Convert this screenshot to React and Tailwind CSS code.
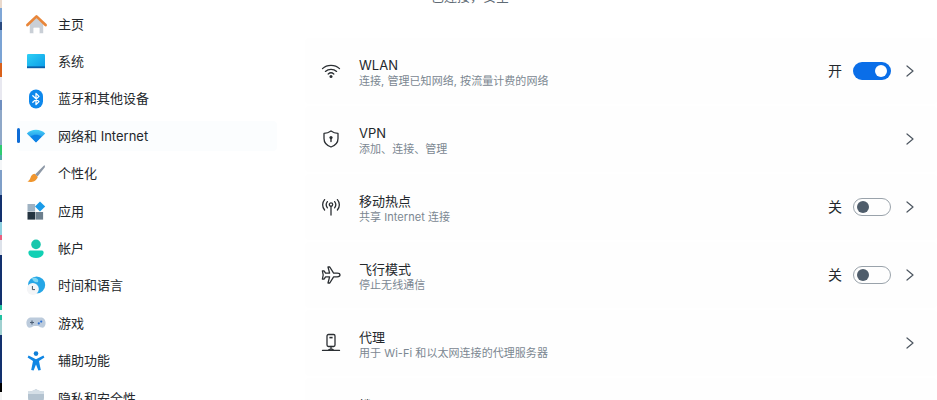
import React from "react";

const Home = () => (
  <svg viewBox="0 0 24 24" className="w-[23px] h-[23px] shrink-0">
    <path d="M5 11 L12 5 L19 11 V21 H15 V15.5 H9 V21 H5 Z" fill="#c9cfd6" />
    <path d="M9 15.5 H15 V21 H9 Z" fill="#fff" />
    <path d="M2.5 12.5 L12 3.5 L21.5 12.5" fill="none" stroke="#e8863a" strokeWidth="2.8" strokeLinecap="round" strokeLinejoin="round" />
  </svg>
);
const System = () => (
  <svg viewBox="0 0 20 20" className="w-[20px] h-[20px]">
    <defs>
      <linearGradient id="sys" x1="0" y1="0" x2="1" y2="1">
        <stop offset="0" stopColor="#2ed0f5" />
        <stop offset="1" stopColor="#0a9be8" />
      </linearGradient>
    </defs>
    <rect x="1" y="2" width="18" height="14" rx="1.2" fill="url(#sys)" />
    <rect x="1" y="14.4" width="18" height="1.8" fill="#0b5fa8" />
  </svg>
);
const Bluetooth = () => (
  <svg viewBox="0 0 20 20" className="w-[20px] h-[20px]">
    <rect x="3" y="0.5" width="14" height="19" rx="7" fill="#0e88ec" />
    <path d="M6.8 6.8 L13 12.6 L10 15.6 V4.4 L13 7.4 L6.8 13.2" fill="none" stroke="#fff" strokeWidth="1.3" strokeLinejoin="round" strokeLinecap="round" />
  </svg>
);
const Wifi = () => (
  <svg viewBox="0 0 20 20" className="w-[20px] h-[20px]">
    <defs>
      <linearGradient id="wf" x1="0" y1="0" x2="0" y2="1">
        <stop offset="0" stopColor="#45d0f7" />
        <stop offset="1" stopColor="#0a74e0" />
      </linearGradient>
    </defs>
    <path d="M0.8 7.4 C5.6 2.6 14.4 2.6 19.2 7.4 L10 16.6 Z" fill="url(#wf)" />
    <path d="M4.6 10.6 C8 8.2 12 8.2 15.4 10.6 L10 16.2 Z" fill="#0c83e6" />
  </svg>
);
const Brush = () => (
  <svg viewBox="0 0 20 20" className="w-[20px] h-[20px]">
    <path d="M18.5 1 L9 10.5 L11.5 12.5 L19 3 Z" fill="#8d98a6" />
    <path d="M8.6 9.8 C6 10 5 12 4.4 14 C3.8 15.8 2.6 17 1.4 17.6 C5 18.6 10 18 11.8 13 Z" fill="#f0962e" />
  </svg>
);
const Apps = () => (
  <svg viewBox="0 0 20 20" className="w-[20px] h-[20px]">
    <rect x="1.5" y="3" width="7.6" height="7.6" fill="#9fb2c2" />
    <rect x="1.5" y="11" width="7.6" height="7.6" fill="#243441" />
    <rect x="9.5" y="11" width="7.6" height="7.6" fill="#6d7f8d" />
    <path d="M14 0.6 L19.2 5.6 L14 10.6 L9 5.6 Z" fill="#1a9be8" />
  </svg>
);
const Account = () => (
  <svg viewBox="0 0 20 20" className="w-[20px] h-[20px]">
    <circle cx="10" cy="5.4" r="4.8" fill="#19c7ad" />
    <path d="M2.4 13.4 C2.4 12 3.4 11.4 4.6 11.4 H15.4 C16.6 11.4 17.6 12 17.6 13.4 C17.6 17 14 19 10 19 C6 19 2.4 17 2.4 13.4 Z" fill="#12d0b4" />
  </svg>
);
const Clock = () => (
  <svg viewBox="0 0 20 20" className="w-[20px] h-[20px]">
    <circle cx="10.6" cy="9" r="8.6" fill="#26a6e6" />
    <path d="M6 2 C10 1 13 3 12 6 C10 7 7 6 6 2 Z" fill="#7fd6f2" />
    <circle cx="6.8" cy="13" r="6" fill="#f4f5f7" />
    <path d="M6.4 10 V13.6 H9" fill="none" stroke="#475563" strokeWidth="1" />
  </svg>
);
const Game = () => (
  <svg viewBox="0 0 20 20" className="w-[20px] h-[20px]">
    <path d="M5 4.5 H15 C18 4.5 19.6 7 19.6 10 C19.6 13.4 17.6 15.2 15.4 14.6 C14 14.2 13 13 12 13 H8 C7 13 6 14.2 4.6 14.6 C2.4 15.2 0.4 13.4 0.4 10 C0.4 7 2 4.5 5 4.5 Z" fill="#bccbdc" />
    <path d="M4 9.5 H8 M6 7.5 V11.5" stroke="#4d5f75" strokeWidth="1.1" />
    <circle cx="12.8" cy="10.4" r="1.1" fill="#2a6fd4" />
    <circle cx="15.2" cy="8.6" r="1.1" fill="#2a6fd4" />
  </svg>
);
const Access = () => (
  <svg viewBox="0 0 20 20" className="w-[20px] h-[20px]">
    <circle cx="10" cy="2.6" r="2.3" fill="#0f7fd8" />
    <path d="M2.6 4.6 L10 8.2 L17.4 4.6 L18.4 6.6 L13 10 L14.8 19 L12.4 19.6 L10 13.4 L7.6 19.6 L5.2 19 L7 10 L1.6 6.6 Z" fill="#0f86e4" />
  </svg>
);
const Shield = () => (
  <svg viewBox="0 0 20 20" className="w-[20px] h-[20px]">
    <path d="M10 1 C12.5 2.8 15.4 3.6 18 3.6 V9.5 C18 14.5 14.5 17.5 10 19 C5.5 17.5 2 14.5 2 9.5 V3.6 C4.6 3.6 7.5 2.8 10 1 Z" fill="#b4c3d0" />
    <path d="M10 1 C12.5 2.8 15.4 3.6 18 3.6 V6 H2 V3.6 C4.6 3.6 7.5 2.8 10 1 Z" fill="#d5dfe7" />
  </svg>
);

const line = { fill: "none", stroke: "#2b2f33", strokeWidth: 1.3, strokeLinecap: "round", strokeLinejoin: "round" };

const WifiLine = () => (
  <svg viewBox="0 0 20 20" className="w-[20px] h-[20px]">
    <path d="M1.5 7.6 C6 3.2 14 3.2 18.5 7.6" {...line} />
    <path d="M4.4 10.4 C7.4 7.6 12.6 7.6 15.6 10.4" {...line} />
    <path d="M7.2 13 C8.8 11.6 11.2 11.6 12.8 13" {...line} />
    <circle cx="10" cy="15.6" r="1.5" fill="#2b2f33" />
  </svg>
);
const ShieldLine = () => (
  <svg viewBox="0 0 20 20" className="w-[20px] h-[20px]">
    <path d="M10 2 C12.2 3.6 14.6 4.3 17 4.4 V9.5 C17 13.8 14 16.6 10 18 C6 16.6 3 13.8 3 9.5 V4.4 C5.4 4.3 7.8 3.6 10 2 Z" {...line} />
    <circle cx="10" cy="8.6" r="1.6" fill="#2b2f33" />
    <path d="M10 9 V12.6" stroke="#2b2f33" strokeWidth="1.4" strokeLinecap="round" />
  </svg>
);
const Hotspot = () => (
  <svg viewBox="0 0 20 20" className="w-[20px] h-[20px]">
    <circle cx="10" cy="7.6" r="1.7" {...line} />
    <path d="M10 9.4 V18" {...line} />
    <path d="M6.4 4.6 C5 6.4 5 9 6.4 10.8 M13.6 4.6 C15 6.4 15 9 13.6 10.8" {...line} />
    <path d="M3.6 2.6 C1 5.6 1 10 3.6 13 M16.4 2.6 C19 5.6 19 10 16.4 13" {...line} />
  </svg>
);
const Plane = () => (
  <svg viewBox="0 0 20 20" className="w-[20px] h-[20px]">
    <path d="M19 10 C19 8.9 17.6 8.2 16.2 8.2 H12.6 L8.8 2 H7 L8.6 8.2 H4.6 L3 5.8 H1.4 L2.2 10 L1.4 14.2 H3 L4.6 11.8 H8.6 L7 18 H8.8 L12.6 11.8 H16.2 C17.6 11.8 19 11.1 19 10 Z" {...line} />
  </svg>
);
const Proxy = () => (
  <svg viewBox="0 0 20 20" className="w-[20px] h-[20px]">
    <rect x="6" y="1.5" width="8" height="12" rx="1.4" {...line} />
    <path d="M8.4 4.6 H11.6" stroke="#2b2f33" strokeWidth="1.6" />
    <path d="M10 13.5 V15.6" {...line} />
    <path d="M1.5 17.4 H18.5" {...line} />
    <path d="M7.6 17.4 C7.6 15.6 12.4 15.6 12.4 17.4" {...line} />
  </svg>
);

const Chevron = () => (
  <svg viewBox="0 0 16 16" className="w-[16px] h-[16px]">
    <path d="M5 3 L11 8 L5 13" fill="none" stroke="#4d5660" strokeWidth="1.2" strokeLinejoin="round" strokeLinecap="round" />
  </svg>
);

const strip = [
  "h-[8px] bg-[#ead9cc]",
  "h-[14px] bg-[#7fa6d6]",
  "h-[8px] bg-[#2a4a80]",
  "h-[33px] bg-[#7ba3d4]",
  "h-[14px] bg-[#d9601a]",
  "h-[23px] bg-[#e8e8f0]",
  "h-[10px] bg-[#6f8fc0]",
  "h-[35px] bg-[#8fa8c8]",
  "h-[10px] bg-[#2ecc71]",
  "h-[5px] bg-[#55aaaa]",
  "h-[10px] bg-[#f4f6f8]",
  "h-[25px] bg-[#7f9fc8]",
  "h-[27px] bg-[#12306e]",
  "h-[13px] bg-[#8fd0e0]",
  "h-[5px] bg-[#e86080]",
  "h-[15px] bg-[#dde2ea]",
  "h-[50px] bg-[#12306e]",
  "h-[5px] bg-[#20c0a0]",
  "h-[5px] bg-[#f4f6f8]",
  "h-[5px] bg-[#20c0a0]",
  "h-[15px] bg-[#a0d0d0]",
  "h-[48px] bg-[#12306e]",
  "h-[9px] bg-[#000000]",
  "h-[8px] bg-[#f4f4f4]",
];

const nav = [
  [Home, "主页"],
  [System, "系统"],
  [Bluetooth, "蓝牙和其他设备"],
  [Wifi, "网络和 Internet", true],
  [Brush, "个性化"],
  [Apps, "应用"],
  [Account, "帐户"],
  [Clock, "时间和语言"],
  [Game, "游戏"],
  [Access, "辅助功能"],
  [Shield, "隐私和安全性"],
];

const rows = [
  [WifiLine, "WLAN", "连接, 管理已知网络, 按流量计费的网络", "开", true],
  [ShieldLine, "VPN", "添加、连接、管理"],
  [Hotspot, "移动热点", "共享 Internet 连接", "关", false],
  [Plane, "飞行模式", "停止无线通信", "关", false],
  [Proxy, "代理", "用于 Wi-Fi 和以太网连接的代理服务器"],
  [null, "拨号", "设置拨号 Internet 连接"],
];

export default function App() {
  return (
    <div className="flex h-[400px] w-[937px] overflow-hidden bg-white text-[#24282c] font-['Inter','Noto_Sans_CJK_SC',sans-serif]">
      <div className="flex w-[2px] shrink-0 flex-col">
        {strip.map((c, i) => (
          <div key={i} className={c} />
        ))}
      </div>
      <nav className="flex w-[303px] shrink-0 flex-col pl-[15px] pt-[5.5px]">
        {nav.map(([Icon, label, active]) => (
          <div key={label} className="flex h-[37.4px] w-[260px] shrink-0 items-center">
            <div className={`relative flex h-[30px] w-full items-center gap-[12px] rounded-[4px] pl-[9px] ${active ? "bg-[#fbfdfe]" : ""}`}>
              {active && <span className="absolute left-0 top-[7px] h-[15px] w-[3px] rounded-full bg-[#0f6cd6]" />}
              <span className="flex h-[20px] w-[20px] shrink-0 items-center justify-center">
                <Icon />
              </span>
              <span className="text-[13px] leading-none">{label}</span>
            </div>
          </div>
        ))}
      </nav>
      <main className="flex min-w-0 flex-1 flex-col">
        <div className="mt-[-11px] h-[15px] pl-[126px] text-[13px] leading-[14px] text-[#5f6b75]">已连接，安全</div>
        <div className="mt-[35px] flex flex-col gap-[2px]">
          {rows.map(([Icon, title, sub, state, on]) => (
            <div key={title} className="flex h-[66px] shrink-0 items-center rounded-[4px] bg-[#fefefe] pl-[16px] pr-[19px]">
              <span className="flex h-[20px] w-[20px] shrink-0 items-center justify-center">{Icon && <Icon />}</span>
              <div className="ml-[18px] min-w-0 flex-1 pt-[3px]">
                <div className="text-[13px] leading-[16px]">{title}</div>
                <div className="mt-[1px] text-[11px] leading-[14px] tracking-[0.05px] text-[#7b8791]">{sub}</div>
              </div>
              {state && (
                <div className="mr-[11px] flex items-center gap-[11px]">
                  <span className="text-[14px] leading-none">{state}</span>
                  {on ? (
                    <span className="flex h-[18px] w-[38px] items-center justify-end rounded-full bg-[#0a6ee8] pr-[4px]">
                      <span className="h-[12px] w-[12px] rounded-full bg-white" />
                    </span>
                  ) : (
                    <span className="flex h-[18px] w-[38px] items-center rounded-full border border-[#9aa3ab] pl-[3px]">
                      <span className="h-[12px] w-[12px] rounded-full bg-[#4f5d6b]" />
                    </span>
                  )}
                </div>
              )}
              <Chevron />
            </div>
          ))}
        </div>
      </main>
    </div>
  );
}
